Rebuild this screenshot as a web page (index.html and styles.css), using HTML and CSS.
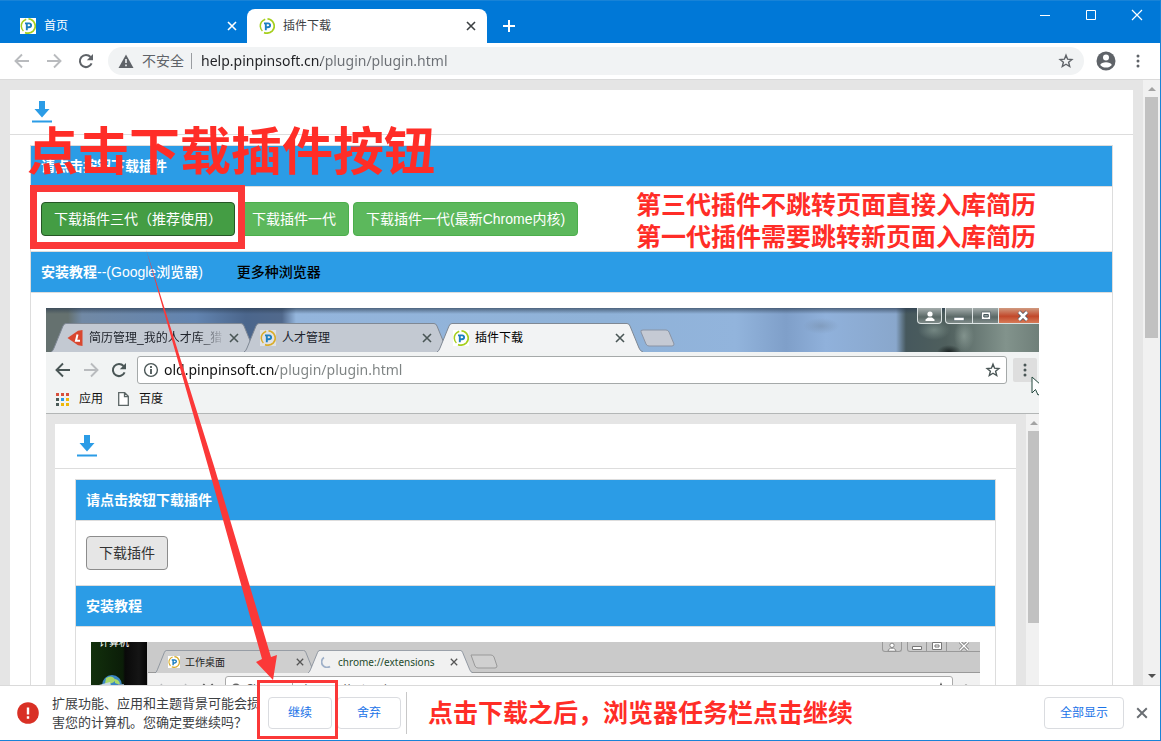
FILE: index.html
```
<!DOCTYPE html>
<html lang="zh-CN">
<head>
<meta charset="utf-8">
<title>插件下载</title>
<link rel="stylesheet" href="styles.css">
</head>
<body>
<svg class="defs" aria-hidden="true">
  <symbol id="logo" viewBox="0 0 16 16">
    <path d="M6.200 1.300Q1 3.500 1.300 8.500Q1.700 11.600 3.400 13" fill="none" stroke="currentColor" stroke-width="1.500"/>
    <path d="M8.500 .9A7.200 7.200 0 0 1 13.400 12.800Q10 16.300 5 14.600" fill="none" stroke="currentColor" stroke-width="1.700"/>
    <path d="M6.800 12.300V6.200M5 5.400h4q2.200.2 2.100 2t-2.300 1.900H7" fill="none" stroke="#1c7fc0" stroke-width="1.900"/>
  </symbol>
  <symbol id="cross" viewBox="0 0 10 10"><path d="M1 1l8 8M9 1L1 9" fill="none" stroke="currentColor" stroke-width="1.600"/></symbol>
  <symbol id="back" viewBox="0 0 16 16"><path d="M15 8H2M8 1.500L1.500 8L8 14.500" fill="none" stroke="currentColor" stroke-width="1.900"/></symbol>
  <symbol id="forward" viewBox="0 0 16 16"><path d="M1 8h13M8 1.500L14.500 8L8 14.500" fill="none" stroke="currentColor" stroke-width="1.900"/></symbol>
  <symbol id="reload" viewBox="0 0 16 16"><path d="M13.600 10.400A6.100 6.100 0 1 1 12.600 4" fill="none" stroke="currentColor" stroke-width="2"/><path d="M15 1v6.200H8.800z" fill="currentColor"/></symbol>
  <symbol id="star" viewBox="0 0 16 16"><path d="M8 2.200l1.600 4 4.300.3-3.300 2.800 1.100 4.200L8 11.200l-3.700 2.300 1.100-4.200-3.300-2.800 4.300-.3z" fill="none" stroke="currentColor" stroke-width="1.400"/></symbol>
  <symbol id="dots" viewBox="0 0 4 16"><circle cx="2" cy="3" r="1.500"/><circle cx="2" cy="8" r="1.500"/><circle cx="2" cy="13" r="1.500"/></symbol>
  <symbol id="download" viewBox="0 0 20 22"><path d="M7 0h6v8h4.500L10 16.500 2.500 8H7zM0 19.500h20v2H0z" fill="#2b9ce6"/></symbol>
  <symbol id="user" viewBox="0 0 12 12"><circle cx="6" cy="4" r="2.600"/><path d="M1.500 11V9.500L4 7.500h4l2.500 2V11z"/></symbol>
  <symbol id="tab-shape" viewBox="0 0 206 29" preserveAspectRatio="none"><path d="M0 29Q2 28 3 25L12 3Q13 .5 15 .5H190Q192 .5 193 3L202 25Q203 28 206 29" stroke="#7f8894"/></symbol>
</svg>

<div class="window">
  <header class="titlebar">
    <div class="tab">
      <svg class="favicon favicon-plate"><use href="#logo"/></svg>
      <span class="tab-title">首页</span>
      <button class="icon-btn" aria-label="关闭标签页"><svg class="i10"><use href="#cross"/></svg></button>
    </div>
    <div class="tab tab-active">
      <svg class="favicon"><use href="#logo"/></svg>
      <span class="tab-title">插件下载</span>
      <button class="icon-btn" aria-label="关闭标签页"><svg class="i10"><use href="#cross"/></svg></button>
    </div>
    <button class="icon-btn new-tab" aria-label="新建标签页"><svg class="i12" viewBox="0 0 12 12"><path d="M6 0v12M0 6h12" stroke="#fff" stroke-width="2"/></svg></button>
    <div class="window-controls">
      <button class="icon-btn" aria-label="最小化"><svg class="i12" viewBox="0 0 12 12"><path d="M1 6.500h10" stroke="#fff"/></svg></button>
      <button class="icon-btn" aria-label="最大化"><svg class="i12" viewBox="0 0 12 12"><path d="M1.500 1.500h9v9h-9z" fill="none" stroke="#fff"/></svg></button>
      <button class="icon-btn" aria-label="关闭"><svg class="i12" viewBox="0 0 12 12"><path d="M1 1l10 10M11 1L1 11" stroke="#fff" stroke-width="1.200"/></svg></button>
    </div>
  </header>

  <nav class="toolbar">
    <div class="nav-buttons">
      <button class="icon-btn dim" aria-label="后退"><svg class="i16"><use href="#back"/></svg></button>
      <button class="icon-btn dim" aria-label="前进"><svg class="i16"><use href="#forward"/></svg></button>
      <button class="icon-btn" aria-label="刷新"><svg class="i16"><use href="#reload"/></svg></button>
    </div>
    <div class="omnibox">
      <svg class="i16" viewBox="0 0 16 16"><path d="M8 1.500L15.500 15H.5z" fill="#5f6368"/><path d="M8 6v4M8 11.500v1.800" stroke="#f1f3f4" stroke-width="1.600"/></svg>
      <label class="insecure" for="url">不安全</label>
      <input class="url" id="url" value="help.pinpinsoft.cn/plugin/plugin.html">
      <button class="icon-btn" aria-label="收藏"><svg class="i16"><use href="#star"/></svg></button>
    </div>
    <button class="icon-btn" aria-label="用户"><svg class="i20" viewBox="0 0 20 20"><circle cx="10" cy="10" r="9.500" fill="#5f6368"/><circle cx="10" cy="6.500" r="3" fill="#fff"/><path d="M4.200 14c1-3.800 10.600-3.800 11.600 0-2.600 3.400-9 3.400-11.600 0z" fill="#fff"/></svg></button>
    <button class="icon-btn menu" aria-label="菜单"><svg class="dots"><use href="#dots"/></svg></button>
  </nav>

  <div class="viewport">
    <main class="page">
      <section class="card">
        <div class="card-head"><svg class="download"><use href="#download"/></svg></div>
        <div class="panel">
          <h2 class="bar">请点击按钮下载插件</h2>
          <div class="actions">
            <button class="btn btn-green btn-pressed">下载插件三代（推荐使用）</button>
            <button class="btn btn-green">下载插件一代</button>
            <button class="btn btn-green">下载插件一代(最新Chrome内核)</button>
          </div>
          <h2 class="bar bar-medium"><span><b>安装教程</b>--(Google浏览器)</span><a class="more" href="#">更多种浏览器</a></h2>
          <div class="tutorial">
            <div class="shot">
              <div class="aero">
                <div class="aero-tab">
                  <svg class="tab-shape"><use href="#tab-shape"/></svg>
                  <svg class="favicon" viewBox="0 0 16 16"><path d="M.5 8L11 .8 15.500 0v16L11 15.200z" fill="#d9472f"/><path d="M10.500 4.500L9 10.800h4" fill="none" stroke="#fff" stroke-width="2"/></svg>
                  <span class="aero-title fade">简历管理_我的人才库_猎</span>
                  <button class="icon-btn" aria-label="关闭标签页"><svg class="i10"><use href="#cross"/></svg></button>
                </div>
                <div class="aero-tab">
                  <svg class="tab-shape"><use href="#tab-shape"/></svg>
                  <svg class="favicon favicon-plate plate-dim gold"><use href="#logo"/></svg>
                  <span class="aero-title">人才管理</span>
                  <button class="icon-btn" aria-label="关闭标签页"><svg class="i10"><use href="#cross"/></svg></button>
                </div>
                <div class="aero-tab aero-active">
                  <svg class="tab-shape"><use href="#tab-shape"/></svg>
                  <svg class="favicon favicon-plate"><use href="#logo"/></svg>
                  <span class="aero-title">插件下载</span>
                  <button class="icon-btn" aria-label="关闭标签页"><svg class="i10"><use href="#cross"/></svg></button>
                </div>
                <svg class="aero-new" viewBox="0 0 35 18"><path d="M1 3Q0 1 3 1H26Q28 1 29 3L34 15Q34 17 32 17H9Q7 17 6 15z" fill="#c5cad4" stroke="#8a94a5"/></svg>
                <div class="aero-controls">
                  <button class="glass glass-user" aria-label="用户"><svg class="i12 white"><use href="#user"/></svg></button>
                  <button class="glass glass-min" aria-label="最小化"><svg class="i12" viewBox="0 0 12 12"><path d="M1 7.500h10v3H1z" fill="#fff" stroke="#51606b" stroke-width=".5"/></svg></button>
                  <button class="glass glass-max" aria-label="最大化"><svg class="i12" viewBox="0 0 12 12"><path d="M1.500 2h9v7.500h-9z" fill="#fff" stroke="#59656c" stroke-width=".8"/><path d="M3.800 4.500h4.500v2.500H3.800z" fill="#98a4a5" stroke="#45545b"/></svg></button>
                  <button class="glass glass-close" aria-label="关闭"><svg class="i12" viewBox="0 0 12 12"><path d="M2 2l8 8M10 2l-8 8" stroke="#4c5564" stroke-width="4"/><path d="M2 2l8 8M10 2l-8 8" stroke="#fff" stroke-width="2.600"/></svg></button>
                </div>
              </div>
              <div class="shot-toolbar">
                <button class="icon-btn" aria-label="后退"><svg class="i16"><use href="#back"/></svg></button>
                <button class="icon-btn dim" aria-label="前进"><svg class="i16"><use href="#forward"/></svg></button>
                <button class="icon-btn" aria-label="刷新"><svg class="i16"><use href="#reload"/></svg></button>
                <div class="shot-omnibox">
                  <svg class="i16" viewBox="0 0 16 16"><circle cx="8" cy="8" r="6.400" fill="none" stroke="#4a5656" stroke-width="1.400"/><path d="M8 7v5M8 4v1.900" stroke="#4a5656" stroke-width="1.800"/></svg>
                  <input class="url shot-url" aria-label="网址" value="old.pinpinsoft.cn/plugin/plugin.html">
                  <button class="icon-btn" aria-label="收藏"><svg class="i16"><use href="#star"/></svg></button>
                </div>
                <button class="icon-btn shot-menu" aria-label="菜单"><svg class="dots"><use href="#dots"/></svg></button>
                <svg class="cursor" viewBox="0 0 10 20"><path d="M1 1v16l3.500-3.500L7 19l3-1.500V9z" fill="#fff" stroke="#24483f"/></svg>
              </div>
              <div class="bookmarks">
                <svg class="apps" viewBox="0 0 13 13"><path d="M0 0h3v3H0zM5 0h3v3H5zM10 0h3v3h-3z" fill="#d8503c"/><path d="M0 5h3v3H0zM0 10h3v3H0z" fill="#4b5b58"/><path d="M5 5h3v3H5z" fill="#2b9ce6"/><path d="M10 5h3v3h-3zM5 10h3v3H5zM10 10h3v3h-3z" fill="#eeb80a"/></svg>
                <a class="bookmark" href="#">应用</a>
                <svg class="doc" viewBox="0 0 11 14"><path d="M.7.7h6l3.600 3.600v9H.7zM6.500.7v4h4" fill="#fff" stroke="#5c6666" stroke-width="1.300"/></svg>
                <a class="bookmark" href="#">百度</a>
              </div>
              <div class="shot-view">
                <div class="shot-page">
                  <section class="card">
                    <div class="card-head"><svg class="download"><use href="#download"/></svg></div>
                    <div class="panel">
                      <h3 class="bar">请点击按钮下载插件</h3>
                      <div class="actions"><button class="btn btn-gray">下载插件</button></div>
                      <h3 class="bar">安装教程</h3>
                      <div class="tutorial">
                        <div class="mini">
                          <div class="desktop">
                            <span class="desktop-label">计算机</span>
                            <svg class="globe" viewBox="0 0 28 16"><circle cx="14" cy="11" r="10" fill="#3a86c4"/><path d="M8 4q5-3 8 0t-2 5-7 1zM17 5q5 1 5 6l-5-2z" fill="#a8d86a"/><path d="M1 11l11-3 2 8H3z" fill="#c9d9e4"/><path d="M20 10h6v6h-6z" fill="#7d9cb5"/></svg>
                          </div>
                          <div class="mini-browser">
                            <div class="mini-strip">
                              <div class="mini-tab">
                                <svg class="tab-shape"><use href="#tab-shape"/></svg>
                                <svg class="i12 mini-icon gold"><use href="#logo"/></svg>
                                <span class="mini-title cjk">工作桌面</span>
                                <svg class="i8"><use href="#cross"/></svg>
                              </div>
                              <div class="mini-tab mini-active">
                                <svg class="tab-shape"><use href="#tab-shape"/></svg>
                                <svg class="i12" viewBox="0 0 12 12"><path d="M3 1.500A5 5 0 0 0 9 10.500" fill="none" stroke="#9fb0c8" stroke-width="1.800"/></svg>
                                <span class="mini-title">chrome://extensions</span>
                                <svg class="i8"><use href="#cross"/></svg>
                              </div>
                              <svg class="mini-new" viewBox="0 0 28 15"><path d="M1 1h20q2 0 3 2l3 9q0 2-2 2H8q-2 0-3-2z" fill="#d0d0d0" stroke="#999"/></svg>
                              <div class="mini-controls">
                                <span class="mini-ctl"><svg class="i10 white outlined" viewBox="0 0 12 12"><use href="#user"/></svg></span>
                                <span class="mini-ctl mini-min"><svg class="i10" viewBox="0 0 10 10"><path d="M.5 4.500h9v3h-9z" fill="#fff" stroke="#777"/></svg></span>
                                <span class="mini-ctl mini-max"><svg class="i10" viewBox="0 0 10 10"><path d="M.5.500h9v7h-9zM3 3h4v2H3z" fill="#fff" stroke="#777"/></svg></span>
                                <span class="mini-ctl mini-close"><svg class="i10" viewBox="0 0 10 10"><path d="M1 0l8 8M9 0L1 8" stroke="#777" stroke-width="3"/><path d="M1 0l8 8M9 0L1 8" stroke="#fff" stroke-width="1.400"/></svg></span>
                              </div>
                            </div>
                            <div class="mini-toolbar">
                              <svg class="i12 dim"><use href="#back"/></svg>
                              <svg class="i12 dim"><use href="#forward"/></svg>
                              <svg class="i12"><use href="#cross"/></svg>
                              <div class="mini-omnibox"><svg class="i10" viewBox="0 0 10 10"><circle cx="5" cy="5" r="4.500" fill="#666"/></svg><span>Chrome</span><span class="mini-url">chrome://extensions</span><svg class="i12 mini-star"><use href="#star"/></svg></div>
                              <svg class="dots mini-dots"><use href="#dots"/></svg>
                            </div>
                          </div>
                        </div>
                      </div>
                    </div>
                  </section>
                </div>
                <div class="scrollbar shot-scroll">
                  <svg class="caret" viewBox="0 0 8 4"><path d="M0 4l4-4 4 4z" fill="#a3a3a3"/></svg>
                  <div class="thumb"></div>
                </div>
              </div>
            </div>
          </div>
        </div>
      </section>
    </main>
    <div class="scrollbar">
      <svg class="caret" viewBox="0 0 8 4"><path d="M0 4l4-4 4 4z" fill="#a3a3a3"/></svg>
      <div class="thumb"></div>
      <svg class="caret caret-down" viewBox="0 0 8 4"><path d="M0 0l4 4 4-4z" fill="#505050"/></svg>
    </div>
  </div>

  <footer class="shelf">
    <svg class="warn" viewBox="0 0 22 22"><circle cx="11" cy="11" r="10.800" fill="#d93025"/><path d="M11 5.500v7M11 14.200v2.500" stroke="#fff" stroke-width="2.400"/></svg>
    <p class="warn-text">扩展功能、应用和主题背景可能会损害您的计算机。您确定要继续吗？</p>
    <div class="shelf-buttons">
      <button class="shelf-btn">继续</button>
      <button class="shelf-btn">舍弃</button>
    </div>
    <span class="divider"></span>
    <button class="shelf-btn show-all">全部显示</button>
    <button class="icon-btn shelf-close" aria-label="关闭下载栏"><svg class="i12"><use href="#cross"/></svg></button>
  </footer>

  <div class="note note-title">点击下载插件按钮</div>
  <div class="note note-versions">第三代插件不跳转页面直接入库简历<br>第一代插件需要跳转新页面入库简历</div>
  <div class="note note-continue">点击下载之后，浏览器任务栏点击继续</div>
  <div class="frame frame-button"></div>
  <div class="frame frame-continue"></div>
  <svg class="arrow" viewBox="0 0 140 440"><path d="M6 9L74 226 105 330 131 417 137 415 133 440 116 422 122 419 97 330 68 226z" fill="#fb3838"/></svg>
</div>
</body>
</html>
```
FILE: styles.css
```
* { box-sizing: border-box; }
body {
  margin: 0;
  font: 14px/20px "Liberation Sans", "Noto Sans CJK SC", sans-serif;
  color: #333;
}
.defs { display: none; }
svg { display: block; flex: none; }
button { font: inherit; cursor: pointer; }
h2, h3, p { margin: 0; }

.i8 { width: 8px; height: 8px; }
.i10 { width: 10px; height: 10px; }
.i12 { width: 12px; height: 12px; }
.i16 { width: 16px; height: 16px; }
.i20 { width: 20px; height: 20px; }
.dots { width: 4px; height: 16px; fill: currentColor; }
.white { fill: #fff; }
.outlined { stroke: #777; }
.icon-btn {
  display: flex;
  flex: none;
  align-items: center;
  justify-content: center;
  padding: 0;
  border: 0;
  background: none;
  color: inherit;
}
.icon-btn.dim, .dim { color: #b9bbbe; }
.favicon { width: 16px; height: 16px; color: #a6cf1e; }
.favicon-plate { background: #fff; }
.plate-dim { background: #dfe2e6; }
.gold { color: #d9ad2b; }

.window {
  position: relative;
  display: flex;
  flex-direction: column;
  height: 100vh;
  overflow: hidden;
  border-right: 1px solid #1883d7;
  border-bottom: 1px solid #1883d7;
  background: #fff;
}

/* Title bar */
.titlebar {
  display: flex;
  flex: none;
  align-items: flex-end;
  height: 43px;
  border-top: 1px solid #1883d7;
  background: #0078d7;
  color: #fff;
}
.tab {
  display: flex;
  align-items: center;
  gap: 8px;
  width: 247px;
  height: 34px;
  padding: 0 10px 0 20px;
  font-size: 12px;
}
.tab-title { flex: 1; }
.tab-active {
  width: 240px;
  padding: 0 11px 0 12px;
  border-radius: 8px 8px 0 0;
  background: #fff;
  color: #3c4043;
}
.new-tab { width: 44px; height: 34px; }
.window-controls { display: flex; align-self: flex-start; margin-left: auto; }
.window-controls .icon-btn { width: 46px; height: 28px; }

/* Toolbar */
.toolbar {
  display: flex;
  flex: none;
  align-items: center;
  height: 37px;
  padding: 0 12px 0 14px;
  border-bottom: 1px solid #dadada;
  color: #5f6368;
}
.nav-buttons { display: flex; gap: 16px; margin-right: 14px; }
.omnibox {
  display: flex;
  flex: 1;
  align-items: center;
  gap: 8px;
  height: 28px;
  margin-right: 12px;
  padding: 0 10px;
  border-radius: 14px;
  background: #f1f3f4;
}
.insecure { margin-right: 1px; padding-right: 7px; border-right: 1px solid #9a9da1; line-height: 16px; }
.url {
  flex: 1;
  min-width: 0;
  padding: 0;
  border: 0;
  outline: 0;
  font: 14px/20px "Noto Sans", sans-serif;
  color: transparent;
  background: linear-gradient(90deg, #202124 120px, #6b6f74 120px);
  -webkit-background-clip: text;
  background-clip: text;
}
.menu { width: 20px; margin-left: 12px; }

/* Page area */
.viewport { display: flex; flex: 1; min-height: 0; overflow: hidden; }
.page { flex: 1; min-width: 0; padding: 10px 10px 0; background: #e5e5e5; }
.card { background: #fff; }
.card-head { display: flex; height: 45px; padding: 11px 22px; border-bottom: 1px solid #ddd; }
.download { width: 20px; height: 22px; }
.panel { margin: 10px 20px 0; border: 1px solid #ddd; }
.bar {
  display: flex;
  height: 41px;
  padding: 10px;
  border-bottom: 1px solid #ddd;
  background: #2b9ce6;
  color: #fff;
  font-size: 14px;
  line-height: 20px;
}
.bar-medium { gap: 34px; font-weight: 500; }
.more { color: #000; text-decoration: none; }
.actions { display: flex; gap: 4px; padding: 15px 10px; border-bottom: 1px solid #ddd; }
.btn {
  height: 34px;
  padding: 0 12px;
  border: 1px solid #4cae4c;
  border-radius: 4px;
  line-height: 20px;
  white-space: nowrap;
}
.btn-green { background: #5cb85c; color: #fff; }
.btn-pressed { border-color: #255625; background: #449d44; }
.btn-gray { border-color: #8c8c8c; background: #e6e6e6; color: #333; }
.tutorial { padding: 15px; }

.scrollbar {
  display: flex;
  flex: none;
  flex-direction: column;
  align-items: center;
  width: 17px;
  padding: 7px 2px;
  background: #f1f1f1;
}
.caret { width: 8px; height: 4px; }
.caret-down { margin-top: auto; }
.thumb { width: 13px; height: 241px; margin-top: 6px; background: #c1c1c1; }

/* Tutorial picture */
.shot { width: 993px; overflow: hidden; background: #f1f3f3; color: #4a5656; }
.aero {
  display: flex;
  align-items: flex-end;
  height: 44px;
  padding-left: 5px;
  background:
    linear-gradient(#2b3c50aa, #2b3c5000 6px),
    radial-gradient(ellipse 16px 10px at 888px 22px, #8ea29b99, transparent),
    radial-gradient(ellipse 10px 16px at 918px 28px, #9aaba499, transparent),
    radial-gradient(ellipse 12px 7px at 903px 44px, #1a2222, transparent),
    radial-gradient(ellipse 18px 8px at 775px 18px, #7890ad99, transparent),
    linear-gradient(90deg, #65716f 22px, #7189a5 36px, #6284b0 150px, #4b668c 200px, #51698c 236px, #94b5dc 250px, #8fb2d8 560px, #92b4dc 690px, #7f9fc9 740px, #90b1db 780px, #89a7cc 850px, #46585d 860px, #4f5f5d 900px, #82938c 960px, #6f7f79);
}
.aero-tab {
  position: relative;
  display: flex;
  align-items: center;
  gap: 6px;
  width: 206px;
  height: 29px;
  padding: 0 18px 0 16px;
  font-size: 12px;
  line-height: 18px;
}
.aero-tab + .aero-tab { margin-left: -13px; }
.tab-shape { position: absolute; inset: 0; width: 100%; height: 100%; fill: #c3c9d2; }
.aero-active .tab-shape { fill: #f2f3f4; }
.aero-tab > .favicon, .aero-tab > .aero-title, .aero-tab > .icon-btn { position: relative; }
.aero-title { flex: 1; overflow: hidden; color: #20242c; white-space: nowrap; }
.aero-active .aero-title { color: #000; }
.fade { -webkit-mask-image: linear-gradient(90deg, #000 108px, transparent 136px); mask-image: linear-gradient(90deg, #000 108px, transparent 136px); }
.aero-new { width: 35px; height: 18px; margin: 0 0 5px -3px; }
.aero-controls { display: flex; align-self: flex-start; margin-left: auto; }
.glass {
  display: flex;
  align-items: center;
  justify-content: center;
  height: 16px;
  padding: 0;
  border: 1px solid #dce3e3;
  border-top: 0;
  background: linear-gradient(#a4acac, #5a6866 60%, #7f8b89);
}
.glass-user { width: 25px; margin-right: 3px; border-radius: 0 0 4px 4px; }
.glass-min { width: 28px; border-radius: 0 0 0 4px; }
.glass-max { width: 26px; border-left: 0; }
.glass-close { width: 40px; padding-left: 8px; border-left: 0; border-right: 0; background: linear-gradient(#d09a80, #c2482a 55%, #d77b58); }
.shot-toolbar { position: relative; display: flex; align-items: center; gap: 12px; height: 36px; padding: 0 2px 0 9px; }
.shot-omnibox {
  display: flex;
  flex: 1;
  align-items: center;
  gap: 5px;
  height: 28px;
  margin: 0 -6px 0 -2px;
  padding: 0 5px;
  border: 1px solid #a5a9a9;
  border-radius: 3px;
  background: #fff;
}
.shot-url { background-image: linear-gradient(90deg, #111 112px, #7d8282 112px); }
.shot-menu { width: 24px; height: 24px; border-radius: 2px; background: #dedede; }
.cursor { position: absolute; right: -2px; bottom: -8px; width: 10px; height: 20px; }
.bookmarks {
  display: flex;
  align-items: center;
  height: 26px;
  padding: 0 10px 3px;
  border-bottom: 1px solid #b3b6b6;
  font-size: 12px;
}
.apps { width: 13px; height: 13px; }
.bookmark { margin: 0 15px 0 10px; color: #111; text-decoration: none; }
.doc { width: 11px; height: 14px; }
.shot-view { display: flex; }
.shot-page { flex: 1; min-width: 0; padding: 10px 10px 0 9px; background: #e5e5e5; }
.shot-scroll { width: 13px; padding-right: 0; }
.shot-scroll .thumb { height: 192px; width: 11px; }

/* Smallest nested picture */
.mini { display: flex; height: 90px; overflow: hidden; background: #cacaca; color: #555; margin-bottom: 15px; }
.desktop { position: relative; width: 56px; overflow: hidden; background: linear-gradient(90deg, #12300c, #0b1d08 32px, #090909 34px, #151515 48px, #050505); }
.desktop-label { position: absolute; top: -9px; left: 8px; color: #fff; font-size: 10px; line-height: 20px; white-space: nowrap; }
.globe { position: absolute; left: 7px; top: 32px; width: 28px; height: 16px; }
.mini-browser { flex: 1; min-width: 0; margin-left: 1px; }
.mini-strip { display: flex; align-items: flex-end; height: 31px; padding-left: 7px; border-bottom: 1px solid #999; }
.mini-tab { position: relative; display: flex; align-items: center; gap: 5px; width: 161px; height: 23px; padding: 0 12px 0 13px; margin-bottom: -1px; }
.mini-tab > svg:not(.tab-shape), .mini-title { position: relative; }
.mini-tab .tab-shape { fill: #cfcfcf; }
.mini-active { width: 165px; margin-left: -8px; padding-right: 15px; }
.mini-active .tab-shape { fill: #f1f1f1; }
.mini-title { flex: 1; color: #1d4a2c; font: 10px/16px "Noto Sans", sans-serif; white-space: nowrap; }
.mini-title.cjk { font-family: "Noto Sans CJK SC", sans-serif; color: #222; }
.mini-icon { background: #fff; }
.mini-new { width: 28px; height: 15px; margin: 0 0 3px -3px; }
.mini-controls { display: flex; align-self: flex-start; margin-left: auto; }
.mini-ctl { display: flex; justify-content: center; width: 20px; height: 10px; border: 1px solid #999; border-top: 0; border-radius: 0 0 3px 3px; }
.mini-min { margin-left: 5px; border-radius: 0 0 0 3px; }
.mini-max { border-left: 0; border-radius: 0; }
.mini-close { width: 33px; border-left: 0; border-right: 0; border-radius: 0; }
.mini-toolbar { display: flex; gap: 11px; height: 50px; padding: 3px 12px 0 8px; background: #f1f1f1; align-items: flex-start; }
.mini-toolbar > svg { margin-top: 7px; }
.mini-omnibox {
  display: flex;
  flex: 1;
  align-items: center;
  gap: 5px;
  height: 24px;
  padding: 0 5px;
  border: 1px solid #aaa;
  border-radius: 3px;
  background: #fff;
  font: 11px/16px "Noto Sans", sans-serif;
}
.mini-url { padding-left: 6px; border-left: 1px solid #aaa; }
.mini-star { margin-left: auto; }

/* Download shelf */
.shelf {
  display: flex;
  flex: none;
  align-items: center;
  height: 55px;
  padding: 0 12px 0 17px;
  border-top: 1px solid #dadada;
  background: #fff;
}
.warn { width: 22px; height: 22px; margin-right: 13px; }
.warn-text { width: 208px; font-size: 13px; line-height: 19px; color: #3c4043; }
.shelf-buttons { display: flex; gap: 5px; margin: 0 5px 0 8px; }
.shelf-btn {
  flex: none;
  width: 64px;
  height: 32px;
  padding: 0;
  border: 1px solid #dadce0;
  border-radius: 4px;
  background: #fff;
  color: #1a73e8;
  font-size: 12px;
}
.divider { width: 1px; height: 42px; background: #c8c8c8; }
.show-all { width: 80px; margin-left: auto; }
.shelf-close { margin-left: 12px; color: #6a6e73; }

/* Annotations laid over the window */
.note { position: absolute; color: #ff2d27; font: bold 25px/32px "Noto Sans CJK SC", sans-serif; white-space: nowrap; }
.note-title { left: 27px; top: 118px; font-size: 51px; line-height: 60px; }
.note-versions { left: 636px; top: 187px; }
.note-continue { left: 428px; top: 695px; }
.frame { position: absolute; border: 3px solid #fb3838; }
.frame-button { left: 30px; top: 185px; width: 215px; height: 64px; border-width: 7px; }
.frame-continue { left: 257px; top: 680px; width: 81px; height: 59px; }
.arrow { position: absolute; left: 140px; top: 240px; width: 140px; height: 440px; pointer-events: none; }
```
